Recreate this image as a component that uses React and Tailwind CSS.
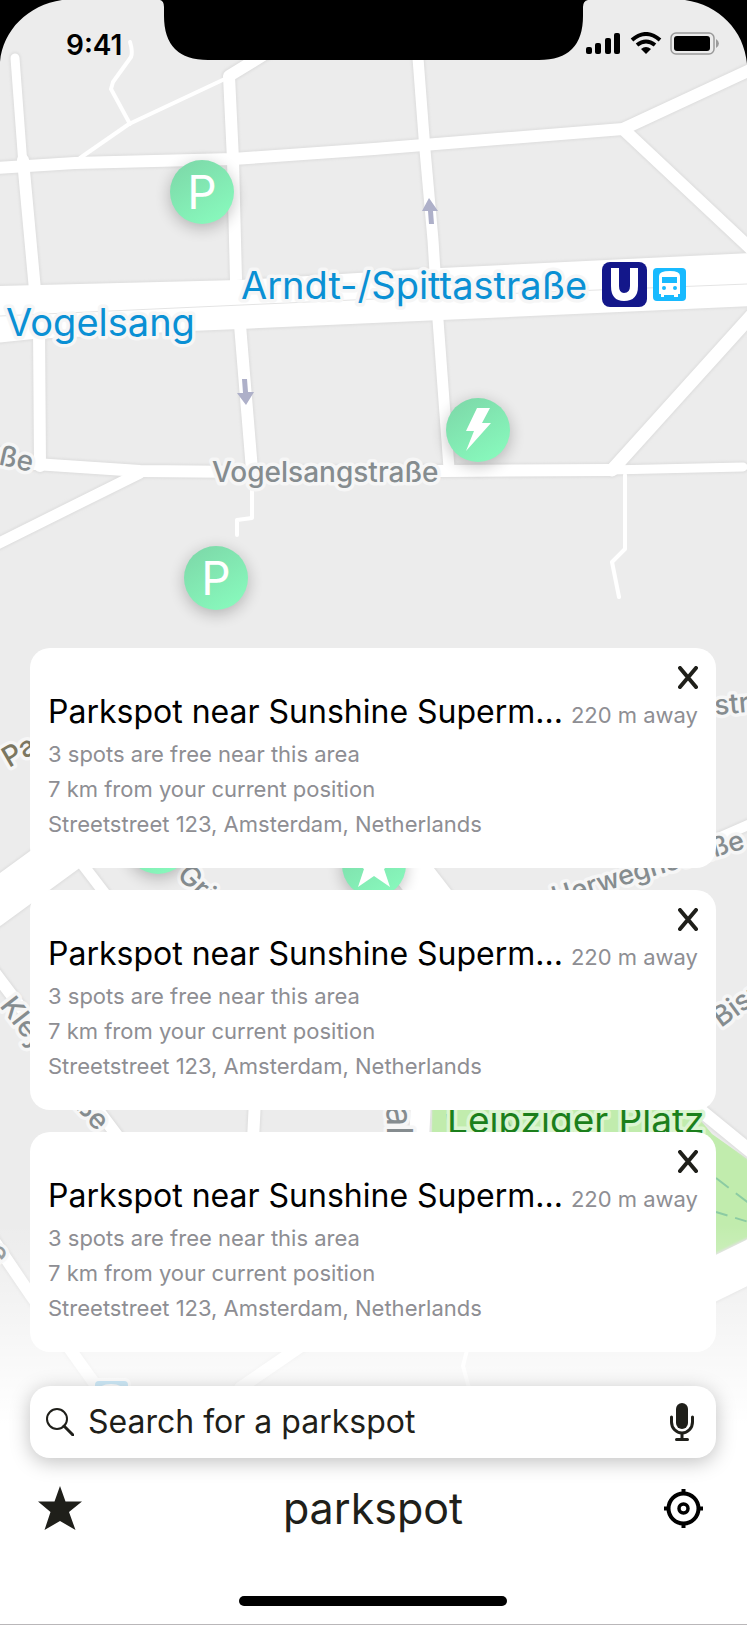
import { useState } from "react";

const initialSpots = [1, 2, 3].map((id) => ({
  id,
  name: "Parkspot near Sunshine Superm...",
  away: "220 m away",
  details: [
    "3 spots are free near this area",
    "7 km from your current position",
    "Streetstreet 123, Amsterdam, Netherlands",
  ],
}));

const roads = [
  { d: "M15 58 L23 165", w: 9 },
  { d: "M23 160 L35 290", w: 12 },
  { d: "M39 325 L40 466", w: 12 },
  { d: "M-5 168 L75 163 L233 159 L374 149 L623 129 L752 69", w: 12 },
  { d: "M623 129 L752 250", w: 12 },
  { d: "M273 49 L229 76 L233 160 L236 280 L240 325 L252 470", w: 12 },
  { d: "M417 45 L425 150 L433 240 L438 320 L449 468", w: 11 },
  { d: "M-5 452 L35 464 L140 471 L250 472 L443 471 L610 470", w: 12 },
  { d: "M610 470 L743 467", w: 9 },
  { d: "M-5 545 L140 473", w: 11 },
  { d: "M752 315 L612 470", w: 13 },
  { d: "M-10 907 L120 812", w: 43 },
  { d: "M70 848 L106 895", w: 11 },
  { d: "M392 845 L440 907", w: 38 },
  { d: "M700 846 L755 822", w: 10 },
  { d: "M-8 969 L128 1150", w: 12 },
  { d: "M255 1100 L253 1140", w: 12 },
  { d: "M-8 1238 L30 1294 L72 1352 L112 1408", w: 12 },
  { d: "M310 1340 L240 1388", w: 12 },
  { d: "M421 1100 L419 1140", w: 20 },
  { d: "M700 1110 L755 1155", w: 13 },
  { d: "M700 1286 L755 1259", w: 42 },
];

const footpaths = [
  "M130 42 Q133 52 131 57 L113 82 L111 89 L130 124",
  "M229 77 L129 124 L80 158",
  "M252 480 L252 518 L237 520 L237 535",
  "M625 475 L625 549 L612 562 L619 597",
  "M467 1350 L463 1366 L469 1388",
];

const labels = [
  { text: "Arndt-/Spittastraße", x: 241, y: 299, size: 38, color: "#0a90d4" },
  { text: "Vogelsang", x: 6, y: 336, size: 38, color: "#0a90d4" },
  { text: "Vogelsangstraße", x: 212, y: 482, size: 28 },
  { text: "ße", x: 31, y: 472, size: 28, turn: 13, end: true },
  { text: "Pa", x: 9, y: 768, size: 28, turn: -30, color: "#7b7660" },
  { text: "straße", x: 715, y: 715, size: 28, turn: -5 },
  { text: "Herweghstraße", x: 746, y: 848, size: 27, turn: -17, end: true },
  { text: "Gri", x: 176, y: 876, size: 28, turn: 45 },
  { text: "Kley", x: -1, y: 1006, size: 28, turn: 52 },
  { text: "ße", x: 97, y: 1132, size: 28, turn: 48, end: true },
  { text: "Bism", x: 721, y: 1028, size: 28, turn: -36 },
  { text: "e", x: -3, y: 1265, size: 28, turn: 52, end: true },
  { text: "al", x: 387, y: 1106, size: 36, turn: 90 },
  { text: "Leipziger Platz", x: 447, y: 1133, size: 37, color: "#1b7f1b", halo: "#dcf5d2" },
];

const MapPin = ({ x, y, children }) => (
  <g transform={`translate(${x} ${y})`}>
    <circle r="32" cy="4" fill="#000" opacity="0.24" filter="url(#pinShadow)" />
    <circle r="32" fill="url(#pinFill)" />
    {children}
  </g>
);

const PinLetter = () => (
  <text y="17" fontSize="46" textAnchor="middle" fill="#fff">
    P
  </text>
);

const CityMap = () => (
  <svg
    className="absolute inset-0 h-full w-full"
    viewBox="0 0 747 1625"
    preserveAspectRatio="xMidYMin slice"
    aria-label="Map of the area"
  >
    <defs>
      <linearGradient id="pinFill" x1="0.2" y1="0" x2="0.8" y2="1">
        <stop offset="0" stopColor="#7dd9a9" />
        <stop offset="1" stopColor="#88fabd" />
      </linearGradient>
      <filter id="pinShadow" x="-50%" y="-50%" width="200%" height="200%">
        <feGaussianBlur stdDeviation="8" />
      </filter>
      <filter id="roadShadow" filterUnits="userSpaceOnUse" x="0" y="0" width="747" height="1625">
        <feGaussianBlur stdDeviation="1" />
      </filter>
    </defs>
    <rect width="747" height="1625" fill="#ececec" />

    {/* park */}
    <path d="M432 1095 H680 L712 1134 L760 1168 V1236 L700 1262 H430 Z" fill="#c1ecad" />
    <g fill="none" stroke="#8ccba3" strokeWidth="2">
      <path d="M446 1100 L450 1140 M500 1108 L516 1136" strokeDasharray="9 5" />
      <path d="M716 1178 L755 1208" strokeDasharray="16 9" />
      <path d="M716 1212 L755 1224" strokeDasharray="12 8" />
    </g>

    {/* streets */}
    <g fill="none" stroke="#dfdfdf" strokeLinejoin="round" strokeLinecap="round" filter="url(#roadShadow)">
      {roads.map((road) => (
        <path key={road.d} d={road.d} strokeWidth={road.w + 3} />
      ))}
      <path
        d="M-5 286 L40 285 L240 280 L441 268 L752 253 V306 L441 320 L240 329 L190 331 L33 339 L-5 343 Z"
        strokeWidth="3"
      />
    </g>
    <g fill="none" stroke="#fff" strokeLinejoin="round" strokeLinecap="round">
      {roads.map((road) => (
        <path key={road.d} d={road.d} strokeWidth={road.w} />
      ))}
      {footpaths.map((d) => (
        <path key={d} d={d} strokeWidth="4" />
      ))}
    </g>
    <path
      d="M-5 286 L40 285 L240 280 L441 268 L752 253 V306 L441 320 L240 329 L190 331 L33 339 L-5 343 Z"
      fill="#fff"
    />
    <path d="M0 316 L374 299 L747 284" fill="none" stroke="#e4e4e4" />
    <g fill="#aeb0c9">
      <path d="M429 198 L438 211 H433 L434 224 H429 L428 211 H422 Z" />
      <path d="M242 379 H247 L248 392 L254 392 L246 405 L237 393 H243 Z" />
    </g>

    {/* street names */}
    <g>
      {labels.map((label) => (
        <text
          key={label.text + label.y}
          transform={`translate(${label.x} ${label.y}) rotate(${label.turn || 0})`}
          fontSize={label.size}
          fontWeight={label.size > 30 ? 400 : 500}
          textAnchor={label.end ? "end" : "start"}
          fill={label.color || "#858c8f"}
          stroke={label.halo || "#f6f6f6"}
          strokeWidth="7"
          strokeLinejoin="round"
          paintOrder="stroke"
        >
          {label.text}
        </text>
      ))}
    </g>

    {/* stations */}
    <rect x="602" y="262" width="45" height="45" rx="8" fill="#13178a" />
    <path d="M615 268 V286 Q615 297 624 297 Q634 297 634 286 V268" fill="none" stroke="#fff" strokeWidth="8" />
    <rect x="653" y="268" width="33" height="33" rx="4" fill="#18baff" />
    <path
      fillRule="evenodd"
      fill="#fff"
      d="M659 276 Q659 271 670 271 Q680 271 680 276 V294 H678 V297 H674 V295 H664 V297 H661 V294 H659 Z M662 277 V283 H677 V277 Z M664 286 A2 2 0 1 0 664 290 A2 2 0 1 0 664 286 Z M675 286 A2 2 0 1 0 675 290 A2 2 0 1 0 675 286 Z"
    />
    <rect x="92" y="1378" width="39" height="40" rx="6" fill="#fff" />
    <rect x="95" y="1381" width="33" height="33" rx="4" fill="#18a0e8" />
    <ellipse cx="111" cy="1392" rx="14" ry="8" fill="#fff" />

    <MapPin x={202} y={192}>
      <PinLetter />
    </MapPin>
    <MapPin x={216} y={578}>
      <PinLetter />
    </MapPin>
    <MapPin x={158} y={842}>
      <PinLetter />
    </MapPin>
    <MapPin x={478} y={430}>
      <path d="M-1 -22 H12 L4 -7 H13 L-12 21 L-4 1 H-12 Z" fill="#fff" />
    </MapPin>
    <MapPin x={374} y={865}>
      <path d="M0 -25 L6 -7 L25 -7 L10 4 L16 22 L0 11 L-16 22 L-10 4 L-25 -7 L-6 -7 Z" fill="#fff" />
    </MapPin>
  </svg>
);

const StatusBar = () => (
  <header className="relative flex h-[60px] items-start justify-between">
    <svg className="absolute left-0 top-0 h-16 w-16" viewBox="0 0 64 64" aria-hidden="true">
      <path d="M0 0 H62 C28 5 3 30 0 62 Z" />
    </svg>
    <svg className="absolute right-0 top-0 h-16 w-16" viewBox="0 0 64 64" aria-hidden="true">
      <path d="M64 0 H2 C36 5 61 30 64 64 Z" />
    </svg>
    <svg
      className="absolute left-1/2 top-0 h-[60px] w-[428px] -translate-x-1/2"
      viewBox="0 0 428 60"
      aria-hidden="true"
    >
      <path d="M0 0 Q4 1 4 7 V16 Q4 60 48 60 H379 Q423 60 423 16 V7 Q423 1 428 0 Z" />
    </svg>
    <time className="pl-[66px] pt-[27px] text-[28px] leading-9 font-semibold">9:41</time>
    <div className="flex gap-2 pr-7 pt-8">
      <svg className="h-[23px] w-9" viewBox="0 0 36 23" aria-hidden="true">
        <rect x="0" y="15" width="6" height="7" rx="2" />
        <rect x="9" y="11" width="6" height="11" rx="2" />
        <rect x="19" y="6" width="6" height="16" rx="2" />
        <rect x="28" y="1" width="6" height="21" rx="2" />
      </svg>
      <svg className="h-[23px] w-8" viewBox="0 0 32 23" aria-hidden="true">
        <g fill="none" stroke="#000" strokeWidth="4">
          <path d="M2 8 Q16 -4 30 8" />
          <path d="M7 13 Q16 6 25 13" />
        </g>
        <path d="M11 17 Q16 13 21 17 L16 22 Z" />
      </svg>
      <svg className="h-[23px] w-[49px]" viewBox="0 0 49 23" aria-hidden="true">
        <rect x="1" y="1" width="43" height="21" rx="5" fill="none" stroke="#9b9b9b" strokeWidth="1.5" />
        <rect x="4" y="4" width="36" height="15" rx="3" />
        <path d="M46 7 Q49 9 49 11.500 Q49 14 46 16 Z" fill="#9b9b9b" />
      </svg>
    </div>
  </header>
);

const SpotCard = ({ spot, onClose }) => (
  <li className="h-[220px] rounded-[20px] bg-white px-[18px] pt-[18px]">
    <div className="flex justify-end">
      <button type="button" aria-label="Close" className="cursor-pointer" onClick={() => onClose(spot.id)}>
        <svg className="h-[23px] w-5" viewBox="0 0 20 23" fill="none" stroke="#1f1f1a" strokeWidth="4" strokeLinecap="round">
          <path d="M2 2 L18 21 M18 2 L2 21" />
        </svg>
      </button>
    </div>
    <div className="flex items-baseline justify-between gap-1">
      <h2 className="min-w-0 truncate text-[32px] leading-[46px]">{spot.name}</h2>
      <span className="shrink-0 text-[22px] text-[#8e8e93]">{spot.away}</span>
    </div>
    <div className="pt-[2px] text-[22px] leading-[35px] text-[#8e8e93]">
      {spot.details.map((line) => (
        <p key={line}>{line}</p>
      ))}
    </div>
  </li>
);

const SearchBar = () => {
  const [query, setQuery] = useState("");

  return (
    <form
      className="flex h-[72px] items-center rounded-[20px] bg-white pl-4 pr-[22px] shadow-[0_4px_20px_rgba(0,0,0,0.25)]"
      onSubmit={(e) => e.preventDefault()}
    >
      <svg className="h-7 w-7 shrink-0" viewBox="0 0 28 28" fill="none" stroke="#1f1f1a" aria-hidden="true">
        <circle cx="11" cy="11" r="10" strokeWidth="2" />
        <path d="M18 18 L27 27" strokeWidth="3" strokeLinecap="round" />
      </svg>
      <input
        type="search"
        aria-label="Search for a parkspot"
        placeholder="Search for a parkspot"
        value={query}
        onChange={(e) => setQuery(e.target.value)}
        className="ml-[14px] min-w-0 flex-1 bg-transparent text-[32px] text-[#1f1f1a] outline-none placeholder:text-[#1f1f1a] placeholder:opacity-100"
      />
      <button type="button" aria-label="Voice search" className="cursor-pointer">
        <svg className="h-[38px] w-6" viewBox="0 0 24 38" aria-hidden="true">
          <rect x="6" y="0" width="12" height="26" rx="6" fill="#1f1f1a" />
          <g fill="none" stroke="#1f1f1a" strokeWidth="3" strokeLinecap="round">
            <path d="M1.500 14 V19 A10.500 11 0 0 0 22.500 19 V14" />
            <path d="M12 31 V36 M6.500 36.500 H17.500" />
          </g>
        </svg>
      </button>
    </form>
  );
};

const BottomBar = () => (
  <nav className="flex h-[100px] items-center justify-between pl-2 pr-[13px]">
    <button type="button" aria-label="Favourites" className="cursor-pointer">
      <svg className="h-11 w-11" viewBox="0 0 44 44" fill="#1f1f1a">
        <path d="M22 0 L27.500 15.500 L44 15.500 L31 26 L37.500 44 L22 35 L6.500 44 L12.500 26 L0 15.500 L16.500 15.500 Z" />
      </svg>
    </button>
    <h1 className="text-[43px] leading-none text-[#1f1f1a]">parkspot</h1>
    <button type="button" aria-label="My location" className="cursor-pointer">
      <svg className="h-[39px] w-[39px]" viewBox="0 0 39 39" fill="none" stroke="#000" strokeWidth="4">
        <circle cx="19.500" cy="19.500" r="15" />
        <circle cx="19.500" cy="19.500" r="4.500" strokeWidth="3.500" />
        <path d="M19.500 0 V5 M19.500 34 V39 M0 19.500 H5 M34 19.500 H39" />
      </svg>
    </button>
  </nav>
);

const App = () => {
  const [spots, setSpots] = useState(initialSpots);

  const handleClose = (id) => {
    setSpots((prev) => prev.filter((spot) => spot.id !== id));
  };

  return (
    <div className="relative flex min-h-screen flex-col overflow-hidden border-b border-[#b9b7b9] font-['Inter',sans-serif] text-black">
      <CityMap />
      {/* fades the map out behind the bottom controls */}
      <div className="absolute inset-x-0 bottom-0 h-[400px] bg-linear-to-t from-white from-50% to-transparent" />
      <StatusBar />
      <main className="relative mt-auto flex flex-col pl-[30px] pr-[31px]">
        <ul className="mb-[34px] flex flex-col gap-[22px]">
          {spots.map((spot) => (
            <SpotCard key={spot.id} spot={spot} onClose={handleClose} />
          ))}
        </ul>
        <SearchBar />
        <BottomBar />
        <div className="mt-[38px] mb-[18px] h-[10px] w-[268px] self-center rounded-full bg-black" />
      </main>
    </div>
  );
};

export default App;
